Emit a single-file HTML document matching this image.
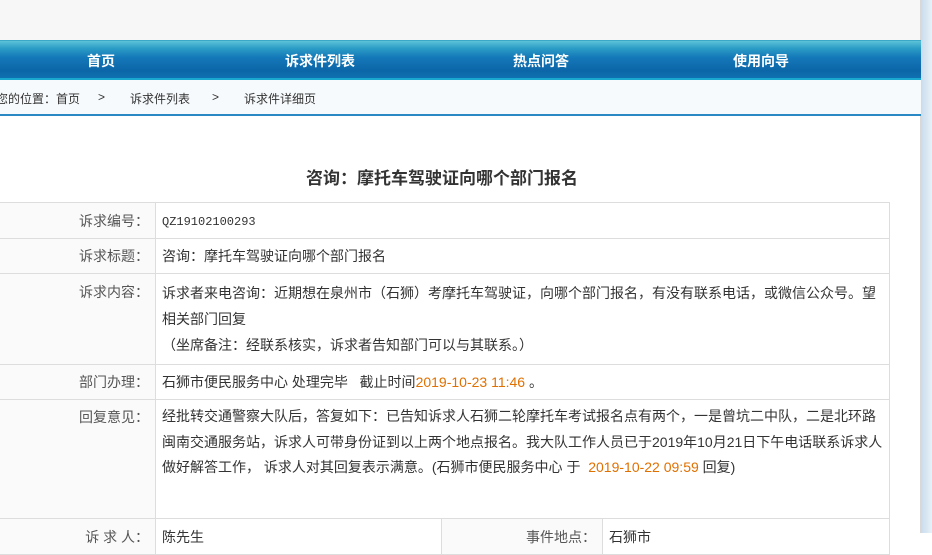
<!DOCTYPE html>
<html><head><meta charset="utf-8"><style>
*{margin:0;padding:0;box-sizing:border-box}
body{width:932px;height:533px;overflow:hidden;background:#fff;font-family:"Liberation Sans","Noto Sans CJK SC",sans-serif;position:relative}
.top{position:absolute;left:0;top:0;width:921px;height:40px;background:#f7f7f7}
.strip{position:absolute;left:920px;top:0;width:12px;height:533px;background:linear-gradient(90deg,#c9dcec,#e8f1f8);border-left:1px solid #d8d8d8}
.nav{position:absolute;left:0;top:40px;width:921px;height:40px;background:linear-gradient(#5cc3d8 0,#2b9cc6 20%,#1478b8 45%,#0c66a8 80%,#0f70b0 100%);border-top:1px solid #3aa8c6;border-bottom:2px solid #1aa8d0}
.nav span{position:absolute;top:10px;color:#fff;font-weight:bold;font-size:14px}
.bc{position:absolute;left:0;top:80px;width:921px;height:36px;background:#f7fafc;border-bottom:2px solid #2a88c4;font-size:12px;color:#333}
.bc span{position:absolute;top:10px}
h1{position:absolute;left:0;width:884px;top:164px;text-align:center;font-size:17px;font-weight:bold;color:#333}
table{position:absolute;left:-10px;top:202px;width:900px;border-collapse:collapse;font-size:14px;color:#333;table-layout:fixed}
td{border:1px solid #ddd;vertical-align:top;padding:0 6px;line-height:17px;overflow:hidden}
td.l{text-align:right;background:#fafafa;color:#555}
.o{color:#e07000}
.mono{font-family:"Liberation Mono",monospace;font-size:12px}
</style></head><body>
<div class="top"></div>
<div class="strip"></div>
<div class="nav"><span style="left:87px">首页</span><span style="left:285px">诉求件列表</span><span style="left:513px">热点问答</span><span style="left:733px">使用向导</span></div>
<div class="bc"><span style="left:-4px">您的位置：首页</span><span style="left:98px">&gt;</span><span style="left:130px">诉求件列表</span><span style="left:212px">&gt;</span><span style="left:244px">诉求件详细页</span></div>
<h1>咨询：摩托车驾驶证向哪个部门报名</h1>
<table>
<colgroup><col style="width:165px"><col style="width:286px"><col style="width:161px"><col></colgroup>
<tr><td class="l" style="height:36px;padding-top:10px">诉求编号：</td><td colspan="3" class="mono" style="padding-top:11px">QZ19102100293</td></tr>
<tr><td class="l" style="height:35px;padding-top:9px">诉求标题：</td><td colspan="3" style="padding-top:9px">咨询：摩托车驾驶证向哪个部门报名</td></tr>
<tr><td class="l" style="height:91px;padding-top:10px">诉求内容：</td><td colspan="3" style="line-height:26px;padding-top:6px">诉求者来电咨询：近期想在泉州市（石狮）考摩托车驾驶证，向哪个部门报名，有没有联系电话，或微信公众号。望相关部门回复<br>（坐席备注：经联系核实，诉求者告知部门可以与其联系。）</td></tr>
<tr><td class="l" style="height:35px;padding-top:9px">部门办理：</td><td colspan="3" style="padding-top:9px">石狮市便民服务中心 处理完毕 &nbsp; 截止时间<span class="o">2019-10-23 11:46</span> 。</td></tr>
<tr><td class="l" style="height:119px;padding-top:9px">回复意见：</td><td colspan="3" style="line-height:25.5px;padding-top:4px">经批转交通警察大队后，答复如下：已告知诉求人石狮二轮摩托车考试报名点有两个，一是曾坑二中队，二是北环路闽南交通服务站，诉求人可带身份证到以上两个地点报名。我大队工作人员已于2019年10月21日下午电话联系诉求人做好解答工作， 诉求人对其回复表示满意。(石狮市便民服务中心 于 &nbsp;<span class="o">2019-10-22 09:59</span> 回复)</td></tr>
<tr><td class="l" style="height:36px;padding-top:10px">诉 求 人：</td><td style="padding-top:10px">陈先生</td><td class="l" style="padding-top:10px">事件地点：</td><td style="padding-top:10px">石狮市</td></tr>
</table>
</body></html>
